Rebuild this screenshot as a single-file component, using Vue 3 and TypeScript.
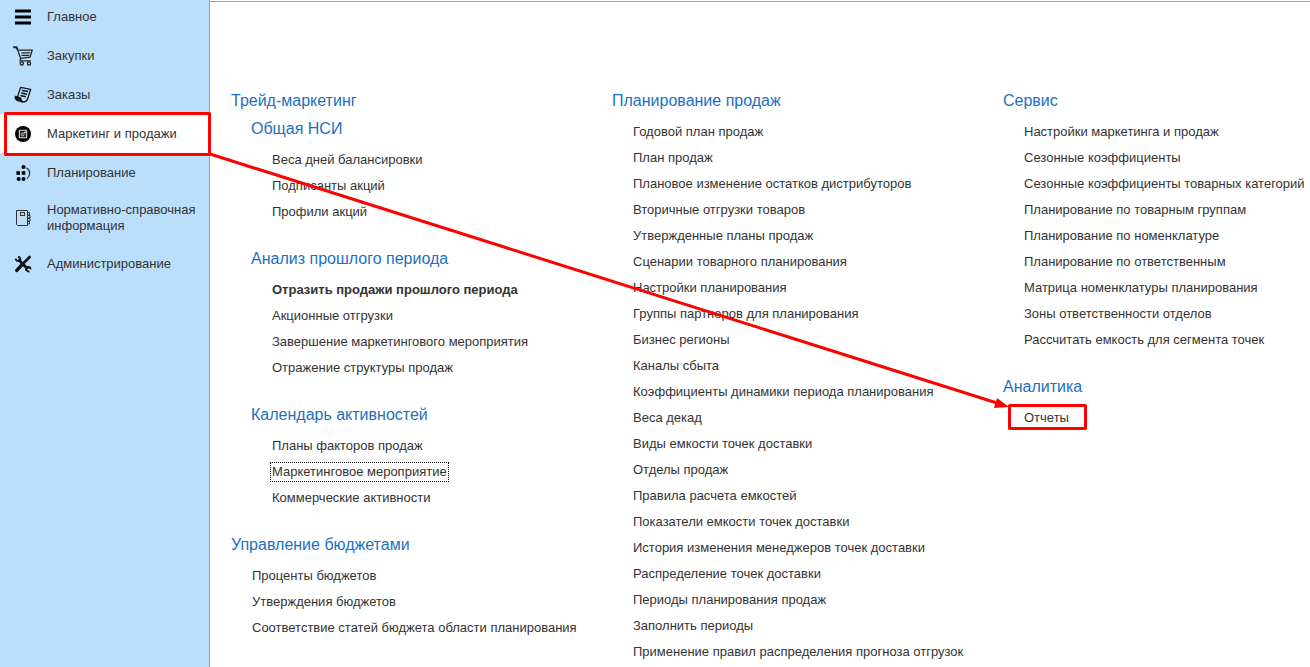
<script setup lang="ts">
interface MenuItem {
  icon: string
  label: string
  active?: boolean
}

interface LinkItem {
  label: string
  bold?: boolean
  focused?: boolean
}

interface Group {
  title: string
  nested?: boolean
  items: LinkItem[]
}

const menu: MenuItem[] = [
  { icon: 'bars', label: 'Главное' },
  { icon: 'cart', label: 'Закупки' },
  { icon: 'orders', label: 'Заказы' },
  { icon: 'marketing', label: 'Маркетинг и продажи', active: true },
  { icon: 'planning', label: 'Планирование' },
  { icon: 'book', label: 'Нормативно-справочная информация' },
  { icon: 'tools', label: 'Администрирование' },
]

const list = (...labels: string[]): LinkItem[] => labels.map((label) => ({ label }))

const columns: Group[][] = [
  [
    { title: 'Трейд-маркетинг', items: [] },
    {
      title: 'Общая НСИ',
      nested: true,
      items: list('Веса дней балансировки', 'Подписанты акций', 'Профили акций'),
    },
    {
      title: 'Анализ прошлого периода',
      nested: true,
      items: [
        { label: 'Отразить продажи прошлого периода', bold: true },
        ...list('Акционные отгрузки', 'Завершение маркетингового мероприятия', 'Отражение структуры продаж'),
      ],
    },
    {
      title: 'Календарь активностей',
      nested: true,
      items: [
        { label: 'Планы факторов продаж' },
        { label: 'Маркетинговое мероприятие', focused: true },
        { label: 'Коммерческие активности' },
      ],
    },
    {
      title: 'Управление бюджетами',
      items: list('Проценты бюджетов', 'Утверждения бюджетов', 'Соответствие статей бюджета области планирования'),
    },
  ],
  [
    {
      title: 'Планирование продаж',
      items: list(
        'Годовой план продаж',
        'План продаж',
        'Плановое изменение остатков дистрибуторов',
        'Вторичные отгрузки товаров',
        'Утвержденные планы продаж',
        'Сценарии товарного планирования',
        'Настройки планирования',
        'Группы партнеров для планирования',
        'Бизнес регионы',
        'Каналы сбыта',
        'Коэффициенты динамики периода планирования',
        'Веса декад',
        'Виды емкости точек доставки',
        'Отделы продаж',
        'Правила расчета емкостей',
        'Показатели емкости точек доставки',
        'История изменения менеджеров точек доставки',
        'Распределение точек доставки',
        'Периоды планирования продаж',
        'Заполнить периоды',
        'Применение правил распределения прогноза отгрузок',
      ),
    },
  ],
  [
    {
      title: 'Сервис',
      items: list(
        'Настройки маркетинга и продаж',
        'Сезонные коэффициенты',
        'Сезонные коэффициенты товарных категорий',
        'Планирование по товарным группам',
        'Планирование по номенклатуре',
        'Планирование по ответственным',
        'Матрица номенклатуры планирования',
        'Зоны ответственности отделов',
        'Рассчитать емкость для сегмента точек',
      ),
    },
    { title: 'Аналитика', items: list('Отчеты') },
  ],
]
</script>

<template>
  <div class="app">
    <nav class="sidebar" aria-label="Разделы">
      <ul class="menu">
        <li v-for="item in menu" :key="item.label">
          <a href="#" class="menu-link" :class="{ active: item.active }">
            <svg class="icon" width="20" height="20" viewBox="0 0 20 20" aria-hidden="true">
              <path v-if="item.icon === 'bars'" d="M2 4H18M2 10H18M2 16H18" stroke="#000" stroke-width="2.8" />
              <g v-else-if="item.icon === 'cart'" fill="none" stroke="#222" stroke-width="1.3" stroke-linecap="round">
                <path d="M1 1.2H3.4L4.4 3" stroke-width="2" />
                <path d="M4.2 2.6L7.6 12.4L7.2 14.8H17.4M6 4.2H19.2L17 11.2L7.6 12.4" />
                <path d="M8.8 6.8H16.4M9 9.3H15.8" />
                <circle cx="8.8" cy="17.4" r="1.6" />
                <circle cx="16" cy="17.4" r="1.6" />
              </g>
              <g v-else-if="item.icon === 'orders'" fill="none" stroke="#111" stroke-width="1.3" stroke-linejoin="round">
                <path d="M7.6 2.4L17.6 4.4L14.6 14Q13 17.6 9 16.8L4.6 11.6Z" />
                <path d="M2.2 11.4L7.8 13.2Q7.6 15.8 9.8 16.8L4.8 15.6Q2.2 14.4 2.2 11.4Z" fill="#111" />
                <path d="M9 5.4L15 6.6M8.2 8L14 9.2M7.4 10.6L12.8 11.7" stroke-width="1.5" />
              </g>
              <g v-else-if="item.icon === 'marketing'">
                <circle cx="10" cy="10" r="8" fill="#000" />
                <rect x="6.3" y="6.3" width="7.4" height="7.4" rx="0.8" fill="#222" stroke="#ddd" stroke-width="1.1" />
                <circle cx="9.7" cy="10.4" r="1.6" fill="#555" stroke="#ccc" stroke-width="0.8" />
                <path d="M11.2 8.4H12.8" stroke="#fff" stroke-width="1.1" />
              </g>
              <g v-else-if="item.icon === 'planning'" fill="#000">
                <circle cx="10.5" cy="4" r="2" />
                <rect x="3.4" y="8.2" width="3.6" height="3.6" />
                <rect x="8.7" y="8.2" width="3.6" height="3.6" />
                <circle cx="5.6" cy="16" r="2" />
                <circle cx="10.5" cy="16" r="2" />
                <path d="M13.4 4.8C17.8 7.4 17.6 12.6 14 15.6" fill="none" stroke="#234" stroke-width="1.2" />
              </g>
              <g v-else-if="item.icon === 'book'" fill="none" stroke="#333" stroke-width="1">
                <path d="M3.5 2.5H14.5V17.5H4.5L3.5 16.5Z" />
                <rect x="7.5" y="4.5" width="4" height="3" />
                <path d="M15 4.5H16.5V7H15M15 7.5H17V10H15M15 10.5H17V13H15M15 13.5H16.5V16H15" />
              </g>
              <g v-else fill="none" stroke="#111">
                <path d="M16.6 3L9.8 9.8" stroke-width="2.6" stroke-linecap="round" />
                <path d="M9.4 10.4L3.8 16.4" stroke-width="3.4" stroke-linecap="round" />
                <path d="M5.4 5.6L14.8 15" stroke-width="2.8" />
                <path d="M2.6 4.6Q3.4 7.8 6.8 7M5 2.6Q8 3.4 7.2 6.6" stroke-width="1.8" />
                <path d="M13.2 16.8Q12.6 13.2 15 13Q17.4 12.8 17.6 15.2M13.6 16Q14.4 17.8 16.4 17.4" stroke-width="1.8" />
              </g>
            </svg>
            <span class="menu-label">{{ item.label }}</span>
          </a>
        </li>
      </ul>
    </nav>

    <main class="content">
      <div v-for="(groups, index) in columns" :key="index" class="column">
        <section
          v-for="group in groups"
          :key="group.title"
          class="group"
          :class="{ nested: group.nested, empty: group.items.length === 0 }"
        >
          <h2 class="title">{{ group.title }}</h2>
          <ul v-if="group.items.length" class="links">
            <li v-for="link in group.items" :key="link.label">
              <a href="#" class="link" :class="{ bold: link.bold, focused: link.focused }">{{ link.label }}</a>
            </li>
          </ul>
        </section>
      </div>
    </main>

    <svg class="callout" width="1310" height="667" viewBox="0 0 1310 667" aria-hidden="true">
      <g fill="none" stroke="#f00" stroke-width="3" stroke-linejoin="round">
        <rect x="5.5" y="113.5" width="204" height="41" />
        <rect x="1009.5" y="405.5" width="76" height="23" />
        <path d="M210 154L997 403" />
      </g>
      <path d="M1009 407L997 398L994 408Z" fill="#f00" />
    </svg>
  </div>
</template>

<style>
body {
  margin: 0;
  background: #fff;
}
</style>

<style scoped>
.app {
  position: relative;
  display: flex;
  min-height: 100vh;
  overflow: hidden;
  font: 13px/16px "Liberation Sans", Arial, sans-serif;
  color: #333;
}

.sidebar {
  box-sizing: border-box;
  flex: 0 0 210px;
  border-right: 1px solid #a0a0a0;
  background: #bbdefb;
}

.menu,
.links {
  margin: 0;
  padding: 0;
  list-style: none;
}

.menu {
  margin-top: -3px;
}

.menu-link {
  display: flex;
  align-items: center;
  gap: 14px;
  box-sizing: border-box;
  min-height: 39px;
  padding: 9px 10px 9px 13px;
  color: inherit;
  text-decoration: none;
}

.menu-link.active {
  background: #fff;
}

.menu-label {
  padding: 1px 0;
}

.icon {
  flex: none;
}

.content {
  flex: 1;
  display: grid;
  grid-template-columns: 381fr 391fr 307fr;
  align-items: start;
  margin-top: 1px;
  padding: 89px 0 0 21px;
  border-top: 1px solid #a0a0a0;
  height: max-content;
  white-space: nowrap;
}

.column {
  min-width: 0;
}

.group {
  margin-bottom: 24px;
}

.group:last-child {
  margin-bottom: 0;
}

.group.empty {
  margin-bottom: 8px;
}

.nested {
  margin-left: 20px;
}

.title {
  margin: 0 0 8px;
  font-size: 16px;
  font-weight: 400;
  line-height: 20px;
  color: #1c70c0;
}

.links li {
  display: flex;
  align-items: center;
  height: 26px;
  padding-left: 19px;
}

.link {
  padding: 1px;
  border: 1px solid transparent;
  color: inherit;
  text-decoration: none;
}

.bold {
  font-weight: 700;
}

.focused {
  border: 1px dotted #000;
}

.callout {
  position: absolute;
  top: 0;
  left: 0;
  pointer-events: none;
}
</style>
